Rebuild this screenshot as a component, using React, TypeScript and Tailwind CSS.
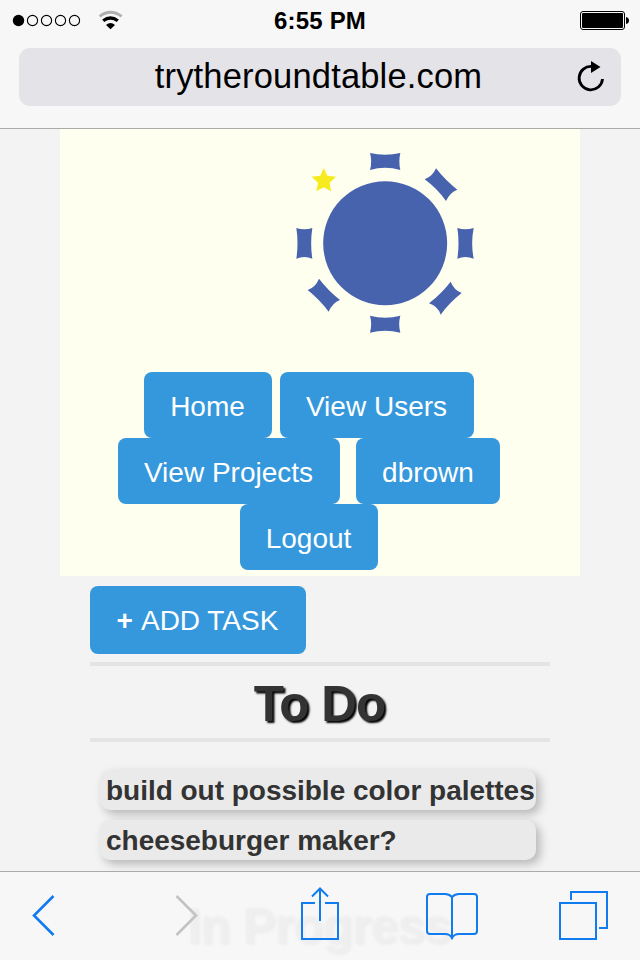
import React from "react";

function StatusBar() {
  return (
    <div className="grid h-10 grid-cols-3 items-center">
      <svg className="h-10 w-[140px]" viewBox="0 0 140 40">
        <circle cx="18.5" cy="20.5" r="5.7" fill="#000" />
        {[32.5, 46.5, 60.5, 74.5].map((x) => (
          <circle key={x} cx={x} cy="20.5" r="5.1" fill="none" stroke="#000" strokeWidth="1.1" />
        ))}
        <path d="M99.6 16.4 Q110.5 8.2 121.6 16.4" fill="none" stroke="#b0b0b0" strokeWidth="3" />
        <path d="M103.2 20.8 Q110.5 15.2 117.8 20.8" fill="none" stroke="#000" strokeWidth="3.3" />
        <path d="M106 25 Q110.5 21 115 25 L110.5 29.2 Z" fill="#000" />
      </svg>
      <div className="pt-0.5 text-center text-[24px] leading-[38px] font-bold tracking-[0.2px] whitespace-nowrap">
        6:55 PM
      </div>
      <svg className="ml-auto h-10 w-[70px]" viewBox="0 0 70 40">
        <rect x="10.5" y="11.5" width="44" height="18" rx="2.5" fill="none" stroke="#000" />
        <rect x="12" y="13" width="41" height="15" rx="1" fill="#000" />
        <path d="M56 17 Q59 17.5 59 20.5 Q59 23.5 56 24 Z" fill="#000" />
      </svg>
    </div>
  );
}

function AddressBar() {
  return (
    <div className="mx-[19px] mt-2 flex h-[58px] items-center rounded-[11px] bg-[#e4e3e8]">
      <div className="w-14" />
      <div className="-mt-0.5 flex-1 pr-[3px] text-center text-[34.5px] leading-[56px] tracking-[0.17px] whitespace-nowrap">
        trytheroundtable.com
      </div>
      <svg className="h-[58px] w-14" viewBox="0 0 56 58">
        <path d="M37.5 31 A11.7 11.7 0 1 1 27 18.5" fill="none" stroke="#000" strokeWidth="2.8" />
        <path d="M26 13 L35.5 19 L26 25 Z" fill="#000" />
      </svg>
    </div>
  );
}

function RoundTableLogo() {
  return (
    <svg className="mt-[11px] ml-[225px] h-[200px] w-[200px]" viewBox="0 0 600 600" fill="#4863ae">
      <circle cx="300.5" cy="309.5" r="186" />
      <path d="M255 39 Q300 49 346 39 Q340 64 346 90 Q300 77 255 90 Q262 64 255 39Z" />
      <path d="M255 527 Q300 539 346 527 Q339 552 346 578 Q300 567 255 578 Q262 552 255 527Z" />
      <path d="M34 264 Q58 272 82 264 Q75 310 82 356 Q58 346 34 356 Q41 310 34 264Z" />
      <path d="M517 264 Q541 272 566 264 Q557 310 566 356 Q541 346 517 356 Q524 310 517 264Z" />
      <path d="M453 85 Q481 121 517 149 Q494 158 483 183 Q457 146 419 118 Q443 109 453 85Z" />
      <path d="M102 416 Q128 450 165 480 Q142 489 131 515 Q105 480 68 450 Q92 441 102 416Z" />
      <path d="M497 425 Q506 449 530 459 Q494 487 467 524 Q458 498 432 490 Q469 461 497 425Z" />
      <path
        fill="#f5eb1e"
        d="M116 84 L127 107 L153 110 L134 128 L138 154 L116 142 L94 154 L99 128 L80 110 L106 107Z"
      />
    </svg>
  );
}

const buttonStyle =
  "flex items-center justify-center rounded-[8px] bg-[#3598dc] text-[28px] whitespace-nowrap text-white";

function Nav() {
  return (
    <nav className="mt-8">
      <div className="flex h-[66px] gap-2 pl-[84px]">
        <a className={buttonStyle + " w-32 pt-1 pr-px"}>Home</a>
        <a className={buttonStyle + " w-[194px] pt-1 pr-px"}>View Users</a>
      </div>
      <div className="flex h-[66px] gap-4 pl-[58px]">
        <a className={buttonStyle + " w-[222px] pt-1 pr-px"}>View Projects</a>
        <a className={buttonStyle + " w-36 pt-1"}>dbrown</a>
      </div>
      <div className="flex h-[66px] pl-[180px]">
        <a className={buttonStyle + " w-[138px] pt-1 pr-px"}>Logout</a>
      </div>
    </nav>
  );
}

function Task({ children }: { children: React.ReactNode }) {
  return (
    <div className="h-10 w-[436px] rounded-[10px] bg-[#eaeaea] pl-1.5 text-[28px] leading-[41px] font-bold tracking-[-0.02px] whitespace-nowrap text-[#333] shadow-[4px_4px_10px_rgba(0,0,0,0.25)]">
      {children}
    </div>
  );
}

function Toolbar() {
  return (
    <div className="absolute inset-x-0 bottom-0 h-[89px] border-t border-[#a9abab] bg-[#f7f7f7]/96 backdrop-blur-[1px]">
      <svg className="h-[88px] w-full" viewBox="0 872 640 88" fill="none" stroke="#117bf0" strokeWidth="2">
        <path d="M53.5 896 L34 915.5 L53.5 935" strokeWidth="2.6" />
        <path d="M176.5 896 L196 915.5 L176.5 935" stroke="#c3c3c3" strokeWidth="2.6" />
        <path d="M315 903 H302 V939 H338 V903 H325 M320 921 V889 M312 896.5 L320 888.5 L328 896.5" />
        <path d="M452 939 V897 Q449 894 445 894 H430 Q427 894 427 897 V931 Q427 934 430 934 H445 Q450 934 452 938 Q454 934 459 934 H474 Q477 934 477 931 V897 Q477 894 474 894 H459 Q455 894 452 897" />
        <path d="M560 903 H596 V939 H560 Z M571 900 V892 H607 V928 H599" />
      </svg>
    </div>
  );
}

export default function App() {
  return (
    <div className="relative h-[960px] w-[640px] overflow-hidden bg-[#f3f3f3] font-['Liberation_Sans',Arial,sans-serif] text-black">
      <header className="h-[129px] border-b border-[#aaa] bg-[#f7f7f7]">
        <StatusBar />
        <AddressBar />
      </header>
      <section className="mx-[60px] h-[447px] overflow-hidden bg-[#fffff0]">
        <RoundTableLogo />
        <Nav />
      </section>
      <main className="mx-[90px] pt-2.5">
        <button className={buttonStyle + " h-[68px] w-[216px] pt-0.5 pr-px"}>
          <span className="pr-2 font-bold">+</span>
          <span>ADD TASK</span>
        </button>
        <h2 className="mt-2 h-20 border-y-4 border-[#e4e4e4] pr-px text-center text-[49.5px] leading-[76px] font-bold tracking-[-1px] text-[#333] [text-shadow:2px_2px_2px_#000]">
          To Do
        </h2>
        <div className="mt-7 ml-2.5 flex flex-col gap-2.5">
          <Task>build out possible color palettes</Task>
          <Task>cheeseburger maker?</Task>
        </div>
        <h2 className="mt-[26px] pr-0.5 text-center text-[49.5px] leading-[80px] font-bold tracking-[-0.8px] text-[#333] [text-shadow:2px_2px_2px_#000]">
          In Progress
        </h2>
      </main>
      <Toolbar />
    </div>
  );
}
